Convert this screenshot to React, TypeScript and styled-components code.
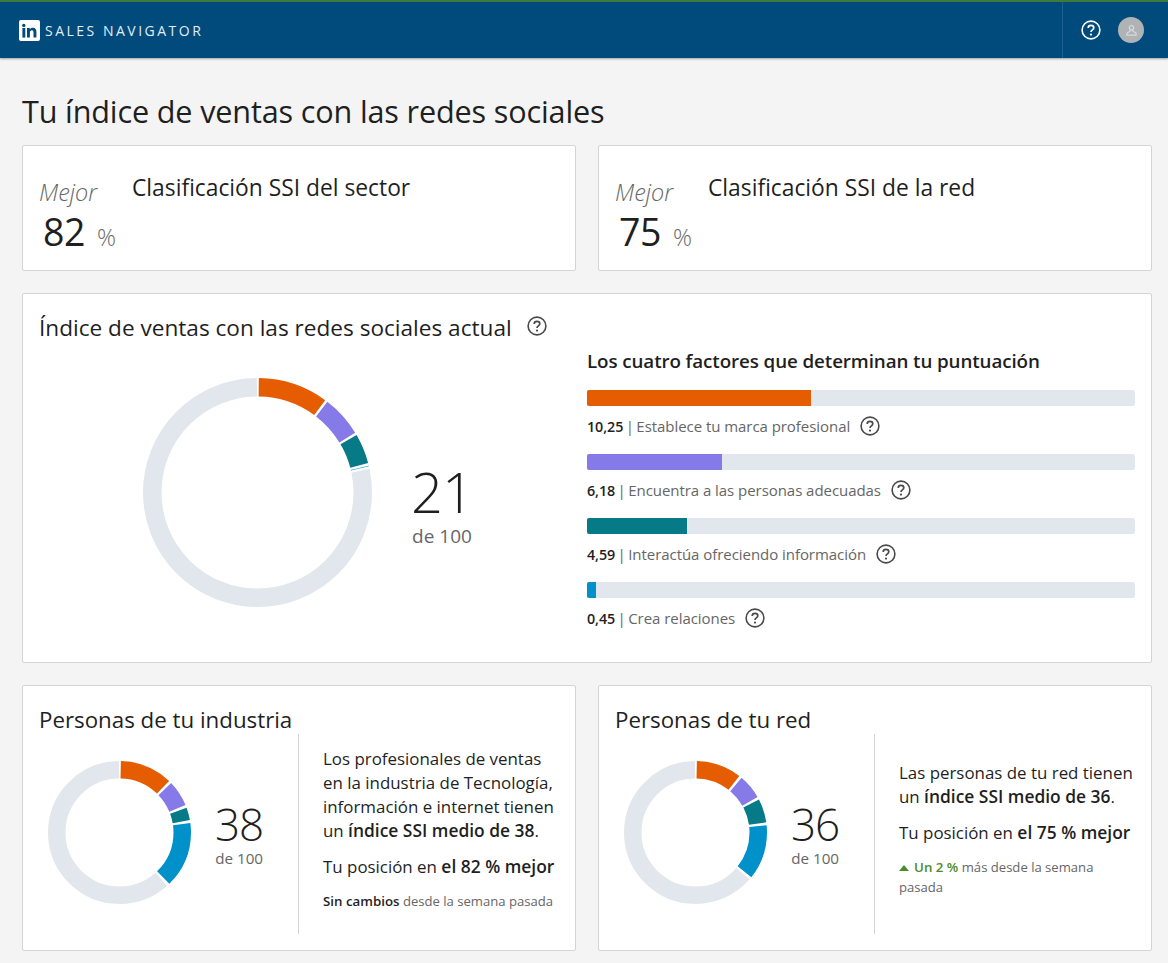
import React from 'react';
import styled, { createGlobalStyle } from 'styled-components';

const GlobalStyle = createGlobalStyle`
  html, body {
    margin: 0;
    padding: 0;
    background-color: #f4f4f4;
    font-family: "Open Sans", "Noto Sans", "Liberation Sans", sans-serif;
    color: #1f1f1f;
  }
`;

const Header = styled.header`
  height: 56px;
  background-color: #004b7c;
  border-top: 2px solid #3f7a3a;
  box-shadow: 0 1px 2px rgba(0, 0, 0, 0.35);
  display: flex;
  align-items: center;
  justify-content: space-between;
`;

const Brand = styled.div`
  display: flex;
  align-items: center;
  gap: 5px;
  padding: 1px 0 0 19px;
`;

const BrandName = styled.span`
  color: #e3edf3;
  font-size: 14px;
  letter-spacing: 2.5px;
  line-height: 20px;
`;

const HeaderTools = styled.div`
  height: 100%;
  width: 106px;
  box-sizing: border-box;
  border-left: 1px solid #1d6190;
  display: flex;
  align-items: center;
  gap: 17px;
  padding-left: 18px;
`;

const Avatar = styled.div`
  width: 26px;
  height: 26px;
  border-radius: 50%;
  background-color: #b0b3b6;
  display: flex;
  align-items: center;
  justify-content: center;
`;

const Page = styled.main`
  padding: 0 16px 12px 22px;
`;

const Title = styled.h1`
  margin: 0;
  padding-top: 33px;
  height: 54px;
  font-size: 30.6px;
  line-height: 40px;
  font-weight: 400;
  letter-spacing: -0.15px;
  white-space: nowrap;
`;

const Row = styled.div`
  display: grid;
  grid-template-columns: 554px 554px;
  gap: 22px;
  margin-bottom: 22px;
`;

const Card = styled.section`
  background-color: #fff;
  border: 1px solid #d4d4d4;
  border-radius: 2px;
  box-sizing: border-box;
`;

const RankCard = styled(Card)`
  height: 126px;
  padding: 28px 16px 0;
  display: flex;
  gap: 16px;
`;

const RankColumn = styled.div`
  width: 77px;
  flex: none;
`;

const Better = styled.div`
  font-size: 23.4px;
  line-height: 36px;
  font-style: italic;
  font-weight: 300;
  color: #666;
`;

const RankValue = styled.div`
  display: flex;
  align-items: baseline;
  gap: 12px;
  padding-left: 4px;
  font-size: 37.5px;
  line-height: 44px;
  letter-spacing: -0.5px;
`;

const Percent = styled.span`
  font-size: 23.5px;
  color: #6b6b6b;
  font-weight: 300;
`;

const RankTitle = styled.h2`
  margin: 0;
  font-size: 22.8px;
  line-height: 28px;
  font-weight: 400;
`;

const ScoreCard = styled(Card)`
  height: 370px;
  margin-bottom: 22px;
  width: 1130px;
  padding: 17px 16px 0;
  display: grid;
  grid-template-columns: 548px 548px;
`;

const CardTitle = styled.h2`
  margin: 0;
  display: flex;
  align-items: center;
  gap: 15px;
  font-size: 22.6px;
  line-height: 34px;
  font-weight: 400;
  white-space: nowrap;
`;

const PeerTitle = styled(CardTitle)`
  font-size: 22.3px;
`;

const TitleHelp = styled.span`
  display: flex;
  margin-top: -4px;
`;

const ScoreBody = styled.div`
  display: flex;
  align-items: center;
  padding: 33px 0 0 104px;
  gap: 39px;
`;

const Total = styled.div`
  display: flex;
  flex-direction: column;
  align-items: center;
  margin-top: 2px;
`;

const BigTotal = styled(Total)`
  margin-top: 17px;
`;

const TotalValue = styled.div<{ $big?: boolean }>`
  font-size: ${(p) => (p.$big ? 56 : 44)}px;
  line-height: ${(p) => (p.$big ? 69 : 50)}px;
  font-weight: 300;
  letter-spacing: -1px;
`;

const TotalLabel = styled.div<{ $big?: boolean }>`
  font-size: ${(p) => (p.$big ? 19 : 15.2)}px;
  line-height: ${(p) => (p.$big ? 20 : 18)}px;
  color: #666;
`;

const Factors = styled.div`
  padding-top: 38px;
`;

const FactorsTitle = styled.h3`
  margin: 0 0 17px;
  font-size: 18.8px;
  line-height: 24px;
  font-weight: 600;
  letter-spacing: -0.1px;
  white-space: nowrap;
`;

const Factor = styled.div`
  height: 64px;
`;

const Track = styled.div`
  height: 16px;
  border-radius: 2px;
  background-color: #e1e7ed;
  overflow: hidden;
`;

const Fill = styled.div<{ $color: string }>`
  height: 100%;
  background-color: ${(p) => p.$color};
`;

const FactorLabel = styled.div`
  display: flex;
  align-items: center;
  gap: 10px;
  height: 40px;
  font-size: 15px;
  color: #666;
  white-space: nowrap;
  letter-spacing: -0.05px;

  & strong {
    font-size: 14.3px;
  }
`;

const Separator = styled.span`
  display: inline-block;
  width: 13px;
  text-align: center;
`;

const Strong = styled.strong`
  font-weight: 600;
  color: #1f1f1f;
`;

const PeerCard = styled(Card)`
  height: 266px;
  padding: 17px 16px 0;
`;

const PeerBody = styled.div`
  display: flex;
  margin-top: -3px;
`;

const PeerChart = styled.div`
  width: 260px;
  height: 200px;
  flex: none;
  box-sizing: border-box;
  border-right: 1px solid #d4d4d4;
  padding: 0 0 4px 9px;
  display: flex;
  align-items: center;
  gap: 24px;
`;

const PeerText = styled.div`
  flex: 1;
  padding: 0 0 10px 24px;
  display: flex;
  flex-direction: column;
  justify-content: center;
  font-size: 16.9px;
  line-height: 24px;
`;

const Para = styled.p`
  margin: 0 0 12px;
  white-space: nowrap;

  & strong {
    font-size: 17.4px;
    line-height: 1;
  }
`;

const Note = styled.p`
  margin: 0;
  font-size: 13.1px;
  line-height: 20px;
  color: #666;
  white-space: nowrap;

  & strong {
    font-size: 13.3px;
    line-height: 1;
  }
`;

const Up = styled.strong`
  font-weight: 600;
  color: #4c8c2b;
`;

const Arrow = styled.span`
  display: inline-block;
  width: 0;
  height: 0;
  border-left: 5px solid transparent;
  border-right: 5px solid transparent;
  border-bottom: 6px solid #4c8c2b;
  margin-right: 5px;
  vertical-align: 1px;
`;

const COLORS = ['#e65c00', '#8679e8', '#067b87', '#0091ca'];

// ends are cumulative score values, in drawing order
const Donut = ({ size, width, ends }: { size: number; width: number; ends: number[] }) => {
  const c = size / 2;
  const r = c - width / 2;
  const len = 2 * Math.PI * r;
  const gap = 2.5;
  let start = 0;
  const parts = ends.map((end) => {
    const part = { from: start, to: end };
    start = end;
    return part;
  });
  const rest = ends[ends.length - 1];
  return (
    <svg width={size} height={size} viewBox={`0 0 ${size} ${size}`} style={{ flex: 'none' }}>
      <g transform={`rotate(-90 ${c} ${c})`} fill="none" strokeWidth={width}>
        <circle
          cx={c}
          cy={c}
          r={r}
          stroke="#e1e7ed"
          strokeDasharray={`${((100 - rest) / 100) * len - gap} ${len}`}
          strokeDashoffset={-(rest / 100) * len - gap / 2}
        />
        {parts.map((p, i) => (
          <circle
            key={i}
            cx={c}
            cy={c}
            r={r}
            stroke={COLORS[i]}
            strokeDasharray={`${Math.max(((p.to - p.from) / 100) * len - gap, 0.6)} ${len}`}
            strokeDashoffset={-(p.from / 100) * len - gap / 2}
          />
        ))}
      </g>
    </svg>
  );
};

const HelpIcon = ({ size = 20, color = '#4a4a4a' }: { size?: number; color?: string }) => (
  <svg width={size} height={size} viewBox="0 0 20 20" fill="none" style={{ flex: 'none' }}>
    <circle cx="10" cy="10" r="8.9" stroke={color} strokeWidth="1.6" />
    <path
      d="M7.2 7.9c0-1.6 1.2-2.6 2.8-2.6s2.8 1 2.8 2.4c0 2.2-2.8 2.1-2.8 4.2"
      stroke={color}
      strokeWidth="1.7"
    />
    <circle cx="10" cy="14.6" r="1.1" fill={color} />
  </svg>
);

const LinkedInLogo = () => (
  <svg width="21" height="21" viewBox="0 0 21 21">
    <rect width="21" height="21" rx="2" fill="#fff" />
    <circle cx="4.8" cy="5.4" r="1.7" fill="#004b7c" />
    <rect x="3.4" y="8" width="2.9" height="9.6" fill="#004b7c" />
    <path
      d="M8 8h2.8v1.4c.5-.9 1.6-1.6 3-1.6 2.8 0 3.6 1.8 3.6 4.4v5.4h-2.9v-4.9c0-1.3-.3-2.4-1.6-2.4s-2 1-2 2.4v4.9H8z"
      fill="#004b7c"
    />
  </svg>
);

const PersonIcon = () => (
  <svg width="13" height="13" viewBox="0 0 12 12" fill="none" stroke="#d8dadc" strokeWidth="1.1">
    <circle cx="6" cy="3.4" r="2" />
    <path d="M4.8 5.4v1.2L1.8 8.3v1.9h8.4V8.3L7.2 6.6V5.4" />
  </svg>
);

const factors = [
  { value: '10,25', label: 'Establece tu marca profesional', pct: 40.9, color: COLORS[0] },
  { value: '6,18', label: 'Encuentra a las personas adecuadas', pct: 24.7, color: COLORS[1] },
  { value: '4,59', label: 'Interactúa ofreciendo información', pct: 18.3, color: COLORS[2] },
  { value: '0,45', label: 'Crea relaciones', pct: 1.7, color: COLORS[3] },
];

export default function App() {
  return (
    <>
      <GlobalStyle />
      <Header>
        <Brand>
          <LinkedInLogo />
          <BrandName>SALES NAVIGATOR</BrandName>
        </Brand>
        <HeaderTools>
          <HelpIcon color="#fff" />
          <Avatar>
            <PersonIcon />
          </Avatar>
        </HeaderTools>
      </Header>
      <Page>
        <Title>Tu índice de ventas con las redes sociales</Title>
        <Row>
          <RankCard>
            <RankColumn>
              <Better>Mejor</Better>
              <RankValue>
                82 <Percent>%</Percent>
              </RankValue>
            </RankColumn>
            <RankTitle>Clasificación SSI del sector</RankTitle>
          </RankCard>
          <RankCard>
            <RankColumn>
              <Better>Mejor</Better>
              <RankValue>
                75 <Percent>%</Percent>
              </RankValue>
            </RankColumn>
            <RankTitle>Clasificación SSI de la red</RankTitle>
          </RankCard>
        </Row>
        <ScoreCard>
          <div>
            <CardTitle>
              Índice de ventas con las redes sociales actual
              <TitleHelp>
                <HelpIcon />
              </TitleHelp>
            </CardTitle>
            <ScoreBody>
              <Donut size={229} width={18.5} ends={[10.25, 16.43, 21.02, 21.47]} />
              <BigTotal>
                <TotalValue $big>21</TotalValue>
                <TotalLabel $big>de 100</TotalLabel>
              </BigTotal>
            </ScoreBody>
          </div>
          <Factors>
            <FactorsTitle>Los cuatro factores que determinan tu puntuación</FactorsTitle>
            {factors.map((f) => (
              <Factor key={f.value}>
                <Track>
                  <Fill $color={f.color} style={{ width: `${f.pct}%` }} />
                </Track>
                <FactorLabel>
                  <span>
                    <Strong>{f.value}</Strong>
                    <Separator>|</Separator>
                    {f.label}
                  </span>
                  <HelpIcon />
                </FactorLabel>
              </Factor>
            ))}
          </Factors>
        </ScoreCard>
        <Row>
          <PeerCard>
            <PeerTitle>Personas de tu industria</PeerTitle>
            <PeerBody>
              <PeerChart>
                <Donut size={143} width={17.5} ends={[12.5, 19, 22.5, 38]} />
                <Total>
                  <TotalValue>38</TotalValue>
                  <TotalLabel>de 100</TotalLabel>
                </Total>
              </PeerChart>
              <PeerText>
                <Para>
                  Los profesionales de ventas
                  <br />
                  en la industria de Tecnología,
                  <br />
                  información e internet tienen
                  <br />
                  un <Strong>índice SSI medio de 38</Strong>.
                </Para>
                <Para>
                  Tu posición en <Strong>el 82 % mejor</Strong>
                </Para>
                <Note>
                  <Strong>Sin cambios</Strong> desde la semana pasada
                </Note>
              </PeerText>
            </PeerBody>
          </PeerCard>
          <PeerCard>
            <PeerTitle>Personas de tu red</PeerTitle>
            <PeerBody>
              <PeerChart>
                <Donut size={143} width={17.5} ends={[10.8, 17, 23, 36]} />
                <Total>
                  <TotalValue>36</TotalValue>
                  <TotalLabel>de 100</TotalLabel>
                </Total>
              </PeerChart>
              <PeerText>
                <Para>
                  Las personas de tu red tienen
                  <br />
                  un <Strong>índice SSI medio de 36</Strong>.
                </Para>
                <Para>
                  Tu posición en <Strong>el 75 % mejor</Strong>
                </Para>
                <Note>
                  <Arrow />
                  <Up>Un 2 %</Up> más desde la semana
                  <br />
                  pasada
                </Note>
              </PeerText>
            </PeerBody>
          </PeerCard>
        </Row>
      </Page>
    </>
  );
}
